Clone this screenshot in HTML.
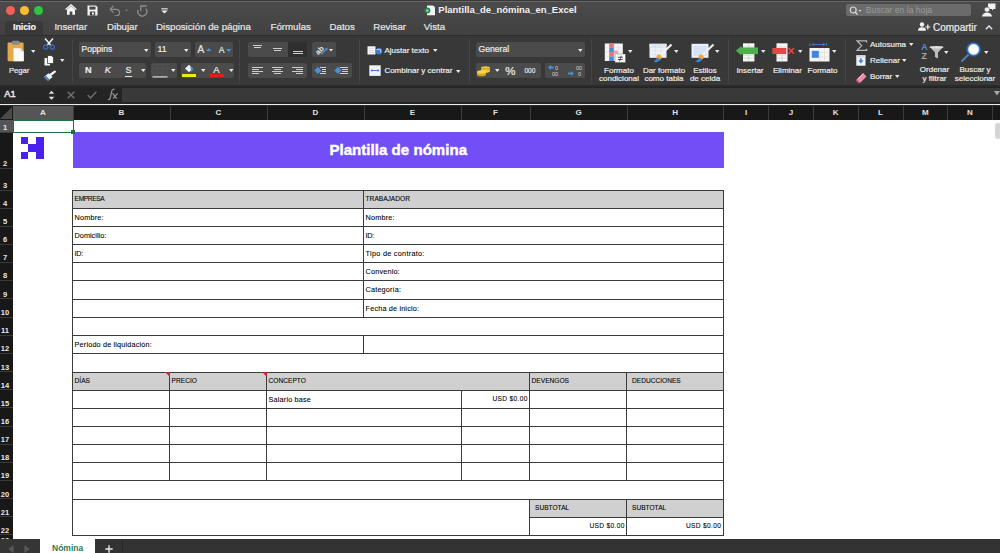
<!DOCTYPE html>
<html><head><meta charset="utf-8">
<style>
*{box-sizing:border-box;margin:0;padding:0}
html,body{width:1000px;height:553px;overflow:hidden;background:#2c2c2c;font-family:"Liberation Sans",sans-serif}
.a{position:absolute}
.t{position:absolute;white-space:nowrap;line-height:1}
#top{left:0;top:0;width:1000px;height:36px;background:linear-gradient(#4b4b4b,#414141)}
#rib{left:0;top:36px;width:1000px;height:49px;background:#383838}
#fbar{left:0;top:85px;width:1000px;height:19px;background:#232323}
#wline{left:0;top:103.7px;width:1000px;height:1.8px;background:#ececec}
#colh{left:0;top:105.5px;width:1000px;height:14.5px;background:#181818}
#grid{left:13px;top:120px;width:987px;height:419px;background:#fff}
#rowh{left:0;top:120px;width:13px;height:419px;background:#181818}
#sbar{left:0;top:539.4px;width:1000px;height:14px;background:#333}
.tab{color:#e6e6e6;font-size:9.7px;-webkit-text-stroke:0.2px #e6e6e6}
.ch{color:#e0e0e0;font-size:8px;font-weight:bold;text-align:center}
.rn{color:#e8e8e8;font-size:7.5px;font-weight:bold;text-align:center;width:10px}
.cl{font-size:7.3px;color:#000;letter-spacing:0.15px;-webkit-text-stroke:0.08px #000}
.cc{font-size:6.6px;color:#000;-webkit-text-stroke:0.08px #000}
.sep{top:39px;height:44px;width:1px;background:#464646}
.box{position:absolute;background:#4b4b4b;border-radius:2px}
.rl{color:#ececec;font-size:8px;-webkit-text-stroke:0.2px #ececec}
.c2{text-align:center;line-height:8px}

</style></head><body>
<div id="top" class="a"></div>
<div class="a" style="left:0;top:0;width:1000px;height:1px;background:#3a3a3a"></div>
<div class="a" style="left:0;top:1px;width:1000px;height:1px;background:#666"></div>
<div class="a" style="left:5.8px;top:5.6px;width:9.4px;height:9.4px;border-radius:50%;background:#f65e57"></div>
<div class="a" style="left:19.8px;top:5.6px;width:9.4px;height:9.4px;border-radius:50%;background:#fbbb2f"></div>
<div class="a" style="left:33.8px;top:5.6px;width:9.4px;height:9.4px;border-radius:50%;background:#2fc640"></div>
<!-- quick access icons -->
<svg class="a" style="left:65px;top:4px" width="12" height="11" viewBox="0 0 12 11">
 <path d="M0.6 5.6 L6 0.8 L11.4 5.6" fill="none" stroke="#f4f4f4" stroke-width="1.3"/>
 <path d="M2 5.5 L6 2 L10 5.5 V10.8 H7.3 V7.5 H4.7 V10.8 H2z" fill="#f4f4f4"/>
</svg>
<svg class="a" style="left:87px;top:4.5px" width="11" height="11" viewBox="0 0 11 11">
 <path d="M0.5 0.5 H9 L10.5 2 V10.5 H0.5z" fill="#f4f4f4"/>
 <rect x="2.5" y="1.6" width="6" height="3" fill="#444"/>
 <rect x="2.8" y="6.5" width="5.4" height="4" fill="#444"/>
 <rect x="5" y="7.5" width="2" height="2" fill="#f4f4f4"/>
</svg>
<svg class="a" style="left:108.5px;top:5px" width="20" height="11" viewBox="0 0 20 11">
 <path d="M4.5 1 L1.2 4.3 L4.5 7.6 M1.5 4.3 H7 a3.5 3.3 0 0 1 0 6.6 H5.5" fill="none" stroke="#8c8c8c" stroke-width="1.3"/>
 <circle cx="17.5" cy="5.2" r="1" fill="#7a7a7a"/>
</svg>
<svg class="a" style="left:136px;top:3.5px" width="13" height="13" viewBox="0 0 13 13">
 <path d="M2.2 5.8 A4.5 4.5 0 1 0 9.8 4.6" fill="none" stroke="#8c8c8c" stroke-width="1.3"/>
 <path d="M10.8 2 H4.8 V7.2" fill="none" stroke="#8c8c8c" stroke-width="1.3"/>
</svg>
<svg class="a" style="left:161px;top:8px" width="7" height="6" viewBox="0 0 7 6">
 <rect x="0.3" y="0.3" width="6.4" height="1.1" fill="#eee"/>
 <polygon points="0.3,2.4 6.7,2.4 3.5,5.6" fill="#eee"/>
</svg>
<!-- title -->
<svg class="a" style="left:424px;top:4.5px" width="12" height="11" viewBox="0 0 12 11">
 <path d="M3 0.5 H8 A3 3 0 0 1 11 3.5 V10.3 H3z" fill="#f4f4f4"/>
 <circle cx="3.4" cy="5.6" r="3" fill="#1f8a4c"/>
 <circle cx="3.4" cy="5.6" r="1.3" fill="#7fd69f"/>
</svg>
<div class="t" style="left:438.3px;top:5px;font-size:9.5px;font-weight:bold;color:#f2f2f2">Plantilla_de_nómina_en_Excel</div>
<!-- search -->
<div class="a" style="left:846px;top:4.2px;width:125px;height:12px;background:#6b6b6b;border-radius:2px"></div>
<svg class="a" style="left:849px;top:5.5px" width="14" height="10" viewBox="0 0 14 10">
 <circle cx="4.2" cy="4" r="3" fill="none" stroke="#dcdcdc" stroke-width="1.2"/>
 <path d="M6.3 6.2 L8.5 8.6" stroke="#dcdcdc" stroke-width="1.4"/>
 <polygon points="9.5,4 12.5,4 11,5.8" fill="#dcdcdc"/>
</svg>
<div class="t" style="left:865.7px;top:5.8px;font-size:8.6px;color:#9a9a9a">Buscar en la hoja</div>
<svg class="a" style="left:981px;top:3px" width="15" height="14" viewBox="0 0 15 14">
 <path d="M7 0.5 H14.5 V6 H12.5 L11 7.5 V6 H7z" fill="#f2f2f2"/>
 <circle cx="6" cy="6.5" r="2.6" fill="#f2f2f2" stroke="#444" stroke-width="0.6"/>
 <path d="M1 13.5 a5 4 0 0 1 10 0z" fill="#f2f2f2"/>
</svg>
<!-- tabs -->
<div class="a" style="left:5px;top:21px;width:38px;height:14px;background:#393939;border-radius:3px 3px 0 0"></div>
<div class="t tab" style="left:13px;top:22.8px;color:#fafafa;font-weight:bold;font-size:9px;letter-spacing:-0.1px">Inicio</div>
<div class="t tab" style="left:54.4px;top:21.8px">Insertar</div>
<div class="t tab" style="left:107px;top:21.8px">Dibujar</div>
<div class="t tab" style="left:156px;top:21.8px">Disposición de página</div>
<div class="t tab" style="left:270.5px;top:21.8px">Fórmulas</div>
<div class="t tab" style="left:329.5px;top:21.8px">Datos</div>
<div class="t tab" style="left:373.2px;top:21.8px">Revisar</div>
<div class="t tab" style="left:423.8px;top:21.8px">Vista</div>
<svg class="a" style="left:918px;top:22px" width="13" height="9" viewBox="0 0 13 9">
 <circle cx="4" cy="2.5" r="2.2" fill="#f0f0f0"/>
 <path d="M0 8.7 a4 3.4 0 0 1 8 0z" fill="#f0f0f0"/>
 <path d="M9.8 2.5 V7.5 M7.3 5 H12.3" stroke="#f0f0f0" stroke-width="1.2"/>
</svg>
<div class="t tab" style="left:933px;top:22.6px;color:#eeeeee;font-size:10px">Compartir</div>
<svg class="a" style="left:984.5px;top:25px" width="8" height="5" viewBox="0 0 8 5">
 <path d="M0.8 4.3 L4 1 L7.2 4.3" fill="none" stroke="#eee" stroke-width="1.3"/>
</svg>
<div id="rib" class="a"></div>
<div class="a" style="left:0;top:35px;width:1000px;height:1px;background:#2e2e2e"></div>
<!-- separators -->
<div class="a sep" style="left:71.5px"></div>
<div class="a sep" style="left:238.5px"></div>
<div class="a sep" style="left:358.5px"></div>
<div class="a sep" style="left:468.5px"></div>
<div class="a sep" style="left:591px"></div>
<div class="a sep" style="left:728px"></div>
<div class="a sep" style="left:845px"></div>
<!-- Paste group -->
<svg class="a" style="left:7px;top:40px" width="18" height="22" viewBox="0 0 18 22">
 <rect x="0.6" y="2.5" width="16" height="18.7" rx="1" fill="#e3a94a"/>
 <rect x="5" y="0.8" width="7.5" height="4" rx="1" fill="#8a8a8a"/>
 <path d="M6.5 8.2h7l3.3 3.3v9.7h-10.3z" fill="#fafafa"/>
 <path d="M13.5 8.2v3.3h3.3" fill="#cfcfcf"/>
</svg>
<svg class="a" style="left:30.5px;top:50px" width="5" height="3"><polygon points="0,0 4.5,0 2.25,3" fill="#e8e8e8"/></svg>
<div class="t rl" style="left:9px;top:66.5px;font-size:7.6px">Pegar</div>
<svg class="a" style="left:42px;top:38px" width="14" height="12" viewBox="0 0 14 12">
 <path d="M3 0.5 L9.5 8 M11 0.5 L4.5 8" stroke="#f2f2f2" stroke-width="1.5"/>
 <circle cx="3.7" cy="9" r="2.1" fill="none" stroke="#3b64a8" stroke-width="1.5"/>
 <circle cx="10.3" cy="9" r="2.1" fill="none" stroke="#3b64a8" stroke-width="1.5"/>
</svg>
<svg class="a" style="left:44px;top:55px" width="10" height="11" viewBox="0 0 10 11">
 <rect x="0.5" y="3" width="5.5" height="7.5" fill="#f5f5f5"/>
 <path d="M3.5 0.5h4l2 2v6h-6z" fill="#fafafa" stroke="#2b2b2b" stroke-width="0.7"/>
</svg>
<svg class="a" style="left:59.5px;top:59px" width="5" height="3"><polygon points="0,0 4.5,0 2.25,3" fill="#e8e8e8"/></svg>
<svg class="a" style="left:43px;top:70px" width="13" height="12" viewBox="0 0 13 12">
 <path d="M7.3 5 L11.8 1.6" stroke="#f4f4f4" stroke-width="2.3" stroke-linecap="round"/>
 <polygon points="1,6.8 5.6,3.2 9.6,7.1 5,10.8" fill="#eef3f8"/>
 <polygon points="1,6.8 2.6,5.5 6.6,9.4 5,10.8" fill="#4a7fc0"/>
</svg>
<!-- Font group -->
<div class="box" style="left:78.6px;top:42px;width:72px;height:14.8px"></div>
<div class="t rl" style="left:81.5px;top:45px;font-size:8.5px;color:#ececec">Poppins</div>
<svg class="a" style="left:143.5px;top:48.5px" width="5" height="3"><polygon points="0,0 4.5,0 2.25,3" fill="#e8e8e8"/></svg>
<div class="box" style="left:154.5px;top:42px;width:36px;height:14.8px"></div>
<div class="t rl" style="left:157.5px;top:45px;font-size:8.8px;color:#ececec">11</div>
<svg class="a" style="left:183.8px;top:48.5px" width="5" height="3"><polygon points="0,0 4.5,0 2.25,3" fill="#e8e8e8"/></svg>
<div class="box" style="left:194.6px;top:42px;width:38.8px;height:14.8px"></div>
<div class="t rl" style="left:197.5px;top:44.8px;font-size:10px;color:#e2e2e2">A</div>
<svg class="a" style="left:206px;top:48px" width="6" height="3"><polygon points="0,3 5.5,3 2.75,0" fill="#4c8fd6"/></svg>
<div class="t rl" style="left:218.8px;top:46px;font-size:8.6px;color:#e2e2e2">A</div>
<svg class="a" style="left:225.5px;top:48.5px" width="6" height="3"><polygon points="0,0 5.5,0 2.75,3" fill="#4c8fd6"/></svg>
<div class="box" style="left:78.6px;top:63.2px;width:67.6px;height:14.8px"></div>
<div class="t rl" style="left:85px;top:66.3px;font-size:9.2px;font-weight:bold;color:#ececec">N</div>
<div class="t rl" style="left:104.8px;top:66.3px;font-size:9.2px;font-style:italic;color:#ececec">K</div>
<div class="t rl" style="left:125.5px;top:66px;font-size:9px;color:#ececec">S</div>
<div class="a" style="left:125px;top:75.5px;width:7px;height:0.8px;background:#e0e0e0"></div>
<svg class="a" style="left:140.5px;top:69px" width="5" height="3"><polygon points="0,0 4.5,0 2.25,3" fill="#e8e8e8"/></svg>
<div class="box" style="left:151px;top:63.2px;width:26px;height:14.8px"></div>
<svg class="a" style="left:152px;top:64px" width="17" height="14" viewBox="0 0 17 14">
 <path d="M0.5 0.5h15v12h-15z M5.5 0.5v12 M10.5 0.5v12 M0.5 4.5h15 M0.5 8.5h15" fill="none" stroke="#555" stroke-width="0.8" stroke-dasharray="1 1"/>
 <rect x="0.5" y="12.3" width="15" height="1.2" fill="#d8d8d8"/>
</svg>
<svg class="a" style="left:171px;top:69px" width="5" height="3"><polygon points="0,0 4.5,0 2.25,3" fill="#e8e8e8"/></svg>
<div class="box" style="left:181px;top:63.2px;width:52.8px;height:14.8px"></div>
<svg class="a" style="left:184px;top:64px" width="11" height="9" viewBox="0 0 11 9">
 <path d="M1 4.5 L5 0.8 L9 4.5 L5 8.3z" fill="#f2f2f2"/>
 <path d="M6 2 L9.5 5 L7.5 8z" fill="#4a86c8"/>
</svg>
<div class="a" style="left:182px;top:74px;width:13.5px;height:3.2px;background:#f0ea12"></div>
<svg class="a" style="left:200.5px;top:69px" width="5" height="3"><polygon points="0,0 4.5,0 2.25,3" fill="#e8e8e8"/></svg>
<div class="t rl" style="left:213.3px;top:64.5px;font-size:9.5px;color:#e8e8e8">A</div>
<div class="a" style="left:210.4px;top:74px;width:13.5px;height:3.2px;background:#e61b1b"></div>
<svg class="a" style="left:228.5px;top:69px" width="5" height="3"><polygon points="0,0 4.5,0 2.25,3" fill="#e8e8e8"/></svg>
<!-- Alignment group -->
<div class="box" style="left:247.8px;top:42.2px;width:40.5px;height:15px;border-radius:2px 0 0 2px"></div>
<div class="a" style="left:288px;top:42.2px;width:18.6px;height:15px;background:#2f2f2f"></div>

<div class="box" style="left:312px;top:42.2px;width:24px;height:15px"></div>
<svg class="a" style="left:313px;top:43px" width="22" height="13" viewBox="0 0 22 13">
 <text x="1.5" y="10" font-family="Liberation Sans" font-size="7.5" font-weight="bold" fill="#e8e8e8" transform="rotate(-45 6 6.5)">ab</text>
 <path d="M8 11.5 L14 5.5" stroke="#4c8fd6" stroke-width="1.3"/>
 <polygon points="14.8,4.7 12,5.2 14.3,7.5" fill="#4c8fd6"/>
 <polygon points="16,6 20,6 18,8.5" fill="#e8e8e8"/>
</svg>
<div class="box" style="left:247.8px;top:63.2px;width:59.4px;height:15px"></div>
<svg class="a" style="left:246px;top:40px" width="64" height="40" viewBox="0 0 64 40"><rect x="7" y="5" width="9" height="1" fill="#cdcdcd"/><rect x="8" y="7" width="7" height="1" fill="#cdcdcd"/><rect x="27" y="8" width="9" height="1" fill="#cdcdcd"/><rect x="28" y="10" width="7" height="1" fill="#cdcdcd"/><rect x="47" y="11" width="10" height="1" fill="#cdcdcd"/><rect x="47" y="13" width="10" height="1" fill="#cdcdcd"/><rect x="6" y="27" width="11" height="1" fill="#cdcdcd"/><rect x="6" y="29" width="7" height="1" fill="#cdcdcd"/><rect x="6" y="31" width="11" height="1" fill="#cdcdcd"/><rect x="6" y="33" width="7" height="1" fill="#cdcdcd"/><rect x="26.0" y="27" width="11" height="1" fill="#cdcdcd"/><rect x="28.0" y="29" width="7" height="1" fill="#cdcdcd"/><rect x="26.0" y="31" width="11" height="1" fill="#cdcdcd"/><rect x="28.0" y="33" width="7" height="1" fill="#cdcdcd"/><rect x="46" y="27" width="11" height="1" fill="#cdcdcd"/><rect x="50" y="29" width="7" height="1" fill="#cdcdcd"/><rect x="46" y="31" width="11" height="1" fill="#cdcdcd"/><rect x="50" y="33" width="7" height="1" fill="#cdcdcd"/></svg>

<div class="box" style="left:312px;top:63.2px;width:40.2px;height:15px"></div>
<svg class="a" style="left:312px;top:63px" width="40" height="15" viewBox="0 0 40 15">
 <polygon points="6,3.8 9.6,7.4 6,11 2.4,7.4" fill="#4c8fd6"/>
 <rect x="8" y="4" width="6" height="1" fill="#d0d0d0"/><rect x="10" y="6" width="4" height="1" fill="#d0d0d0"/><rect x="10" y="8" width="4" height="1" fill="#d0d0d0"/><rect x="8" y="10" width="6" height="1" fill="#d0d0d0"/>
 <polygon points="26,3.8 29.6,7.4 26,11 22.4,7.4" fill="#4c8fd6"/>
 <rect x="28" y="4" width="8" height="1" fill="#d0d0d0"/><rect x="30" y="6" width="6" height="1" fill="#d0d0d0"/><rect x="30" y="8" width="6" height="1" fill="#d0d0d0"/><rect x="28" y="10" width="8" height="1" fill="#d0d0d0"/>
</svg>
<!-- Wrap / merge -->
<svg class="a" style="left:367px;top:46px" width="16" height="9" viewBox="0 0 16 9">
 <rect x="0.5" y="0.3" width="8" height="8.2" fill="#f4f4f4"/>
 <path d="M2 2.5h5M2 4.5h4M2 6.5h5" stroke="#d0d0d0" stroke-width="0.6"/>
 <circle cx="12" cy="5.2" r="3.3" fill="#3f7fd0"/>
 <path d="M9.5 3.5 h4 v3" stroke="#cfe0f5" stroke-width="0.8" fill="none"/>
</svg>
<div class="t rl" style="left:384.4px;top:46.6px">Ajustar texto</div>
<svg class="a" style="left:433.2px;top:49px" width="5" height="3"><polygon points="0,0 4.5,0 2.25,3" fill="#e8e8e8"/></svg>
<svg class="a" style="left:368.5px;top:65px" width="12" height="11" viewBox="0 0 12 11">
 <rect x="0.3" y="0.3" width="11.4" height="10.6" fill="#eef2f7"/>
 <path d="M2 5.5h8" stroke="#3f7fd0" stroke-width="1"/>
 <polygon points="1.5,5.5 3.5,4 3.5,7" fill="#3f7fd0"/>
 <polygon points="10.5,5.5 8.5,4 8.5,7" fill="#3f7fd0"/>
</svg>
<div class="t rl" style="left:384.4px;top:67.2px">Combinar y centrar</div>
<svg class="a" style="left:456px;top:69.5px" width="5" height="3"><polygon points="0,0 4.5,0 2.25,3" fill="#e8e8e8"/></svg>
<!-- Number group -->
<div class="box" style="left:475.9px;top:42px;width:109px;height:15px"></div>
<div class="t rl" style="left:478.5px;top:45.2px;font-size:8.6px;color:#ececec">General</div>
<svg class="a" style="left:578.2px;top:48.7px" width="5" height="3"><polygon points="0,0 4.5,0 2.25,3" fill="#e8e8e8"/></svg>
<div class="box" style="left:475.9px;top:63.4px;width:65px;height:14.4px"></div>
<svg class="a" style="left:476px;top:65px" width="15" height="12" viewBox="0 0 15 12">
 <ellipse cx="9.5" cy="3" rx="4.5" ry="1.8" fill="#f0c93a"/>
 <path d="M5 3v2.5a4.5 1.8 0 0 0 9 0V3" fill="#d9a520"/>
 <ellipse cx="9.5" cy="6" rx="4.5" ry="1.8" fill="#f0c93a"/>
 <path d="M1 7v2.5a4.5 1.8 0 0 0 9 0V7" fill="#d9a520"/>
 <ellipse cx="5.5" cy="7" rx="4.5" ry="1.8" fill="#f5d54a"/>
</svg>
<svg class="a" style="left:494.5px;top:69px" width="5" height="3"><polygon points="0,0 4.5,0 2.25,3" fill="#e8e8e8"/></svg>
<div class="t rl" style="left:505.3px;top:65.5px;font-size:11.5px;color:#ececec">%</div>
<div class="t rl" style="left:524.5px;top:68.3px;font-size:6.5px;color:#d8d8d8">000</div>
<div class="box" style="left:545.4px;top:63.4px;width:39.6px;height:14.4px"></div>
<svg class="a" style="left:547px;top:64px" width="38" height="13" viewBox="0 0 38 13">
 <polygon points="1,3.5 4,1 4,6" fill="#4c8fd6"/><rect x="3.5" y="2.5" width="3" height="2" fill="#4c8fd6"/>
 <text x="8" y="6" font-family="Liberation Sans" font-size="5.5" fill="#d8d8d8">0</text>
 <text x="5" y="12" font-family="Liberation Sans" font-size="5.5" fill="#d8d8d8">00</text>
 <text x="29" y="6" font-family="Liberation Sans" font-size="5.5" fill="#d8d8d8">00</text>
 <polygon points="27,9.5 24,7 24,12" fill="#4c8fd6" transform="translate(0,0)"/><rect x="21" y="8.5" width="3" height="2" fill="#4c8fd6"/>
 <text x="31" y="12" font-family="Liberation Sans" font-size="5.5" fill="#d8d8d8">0</text>
</svg>
<!-- Styles group -->
<svg class="a" style="left:604px;top:42.5px" width="23" height="20" viewBox="0 0 23 20">
 <rect x="0.8" y="0.5" width="18" height="17.5" fill="#f6f6f6"/>
 <path d="M0.8 4.8h18M0.8 9.1h18M0.8 13.4h18M10 0.5v17.5M14.5 0.5v17.5" stroke="#d8d8d8" stroke-width="0.5"/>
 <rect x="5.2" y="0.5" width="4.6" height="4.3" fill="#e87070"/>
 <rect x="5.2" y="4.8" width="4.6" height="4.3" fill="#4a8ad8"/>
 <rect x="5.2" y="9.1" width="4.6" height="4.3" fill="#e87070"/>
 <rect x="9.8" y="7.5" width="4" height="3" fill="#f0a0a0"/>
 <rect x="5.2" y="13.4" width="4.6" height="4.6" fill="#4a8ad8"/>
 <rect x="11" y="11" width="10.5" height="8.5" fill="#fafafa" stroke="#555" stroke-width="0.4"/>
 <path d="M13.8 14.3h5M13.8 16.5h5M15.5 18.3l1.8-5.5" stroke="#333" stroke-width="0.8"/>
</svg>
<svg class="a" style="left:628px;top:50px" width="5" height="3"><polygon points="0,0 4.5,0 2.25,3" fill="#e8e8e8"/></svg>
<div class="t rl c2" style="left:598px;width:42px;top:67.3px">Formato<br>condicional</div>
<svg class="a" style="left:649px;top:42.5px" width="24" height="20" viewBox="0 0 24 20">
 <rect x="0.5" y="0.8" width="17" height="14" fill="#eef3fa"/>
 <rect x="0.5" y="0.8" width="17" height="3" fill="#dfe8f3"/>
 <path d="M0.5 4.5h17M0.5 8h17M0.5 11.5h17M6 0.8v14M12 0.8v14" stroke="#c9d7e8" stroke-width="0.5"/>
 <path d="M22.5 1.5 L11 12.5" stroke="#f0f0f0" stroke-width="2.2"/>
 <circle cx="10" cy="14" r="2.6" fill="#f0a93a"/>
 <path d="M4.5 18.5 L9 14.5 L11.5 17 L7.5 19.5z" fill="#3f7fd0"/>
</svg>
<svg class="a" style="left:673.5px;top:50px" width="5" height="3"><polygon points="0,0 4.5,0 2.25,3" fill="#e8e8e8"/></svg>
<div class="t rl c2" style="left:642px;width:44px;top:67.3px">Dar formato<br>como tabla</div>
<svg class="a" style="left:690.5px;top:42.5px" width="24" height="20" viewBox="0 0 24 20">
 <rect x="0.5" y="0.8" width="17" height="14" fill="#eef3fa"/>
 <rect x="2.5" y="2.8" width="13" height="10" fill="#d3e2f5"/>
 <path d="M22.5 1.5 L11 12.5" stroke="#f0f0f0" stroke-width="2.2"/>
 <circle cx="10" cy="14" r="2.6" fill="#f0a93a"/>
 <path d="M4.5 18.5 L9 14.5 L11.5 17 L7.5 19.5z" fill="#3f7fd0"/>
</svg>
<svg class="a" style="left:715px;top:50px" width="5" height="3"><polygon points="0,0 4.5,0 2.25,3" fill="#e8e8e8"/></svg>
<div class="t rl c2" style="left:685px;width:40px;top:67.3px">Estilos<br>de celda</div>
<!-- Cells group -->
<svg class="a" style="left:735px;top:42.5px" width="25" height="19" viewBox="0 0 25 19">
 <rect x="8" y="0.3" width="11.4" height="18.2" fill="#f7f7f7"/>
 <path d="M8 4h11.4M8 12h11.4M8 15h11.4M13.7 12v6.5M13.7 0.3v3.7" stroke="#bbb" stroke-width="0.5"/>
 <rect x="6" y="4.5" width="17" height="6.6" fill="#4cb04c"/>
 <polygon points="0.8,7.8 6.5,3 6.5,12.6" fill="#4cb04c"/>
 <rect x="6" y="6.2" width="5" height="3.2" fill="#4cb04c"/>
</svg>
<svg class="a" style="left:761.2px;top:50px" width="5" height="3"><polygon points="0,0 4.5,0 2.25,3" fill="#e8e8e8"/></svg>
<div class="t rl" style="left:736.4px;top:66.6px">Insertar</div>
<svg class="a" style="left:771.5px;top:42.5px" width="24" height="19" viewBox="0 0 24 19">
 <rect x="4.5" y="0.3" width="11" height="18.2" fill="#f7f7f7"/>
 <path d="M4.5 4h11M4.5 12h11M4.5 15h11M10 12v6.5" stroke="#bbb" stroke-width="0.5"/>
 <rect x="0.3" y="5" width="14" height="6" fill="#e84545"/>
 <path d="M16.5 5 L22 10.8 M22 5 L16.5 10.8" stroke="#e84545" stroke-width="1.6"/>
</svg>
<svg class="a" style="left:797.5px;top:50px" width="5" height="3"><polygon points="0,0 4.5,0 2.25,3" fill="#e8e8e8"/></svg>
<div class="t rl" style="left:773px;top:66.6px">Eliminar</div>
<svg class="a" style="left:808.5px;top:41.5px" width="21" height="20" viewBox="0 0 21 20">
 <path d="M1 1v3M17.5 1v3" stroke="#3f7fd0" stroke-width="0.9"/>
 <path d="M3 2.5h13" stroke="#3f7fd0" stroke-width="0.9"/>
 <polygon points="2.5,2.5 5,1 5,4" fill="#3f7fd0"/><polygon points="16.5,2.5 14,1 14,4" fill="#3f7fd0"/>
 <rect x="0.5" y="6" width="20" height="13.5" fill="#f4f4f4"/>
 <path d="M11 6v13.5M15.5 6v13.5M0.5 10.5h20M0.5 15h20" stroke="#d5d5d5" stroke-width="0.5"/>
 <rect x="2.8" y="8.8" width="7" height="7" fill="#3f86d6"/>
</svg>
<svg class="a" style="left:832.4px;top:50px" width="5" height="3"><polygon points="0,0 4.5,0 2.25,3" fill="#e8e8e8"/></svg>
<div class="t rl" style="left:807.6px;top:66.6px">Formato</div>
<!-- Editing group -->
<svg class="a" style="left:855.5px;top:39.5px" width="12" height="12" viewBox="0 0 12 12">
 <path d="M10.6 2.4 V0.8 H1 L5.6 5.6 L1 10.4 H10.6 V8.8" fill="none" stroke="#b5b5b5" stroke-width="1.3"/>
</svg>
<div class="t rl" style="left:870px;top:41.3px">Autosuma</div>
<svg class="a" style="left:908.5px;top:43px" width="5" height="3"><polygon points="0,0 4.5,0 2.25,3" fill="#e8e8e8"/></svg>
<svg class="a" style="left:856px;top:55px" width="10" height="11" viewBox="0 0 10 11">
 <rect x="0.3" y="0.3" width="9.2" height="10.4" fill="#f4f4f4"/>
 <rect x="0.3" y="0.3" width="9.2" height="2" fill="#cfd8e3"/>
 <path d="M4.9 3v3" stroke="#3f7fd0" stroke-width="1.4"/>
 <polygon points="2.2,5.3 7.6,5.3 4.9,8.5" fill="#3f7fd0"/>
</svg>
<div class="t rl" style="left:870px;top:56.8px">Rellenar</div>
<svg class="a" style="left:902px;top:58.5px" width="5" height="3"><polygon points="0,0 4.5,0 2.25,3" fill="#e8e8e8"/></svg>
<svg class="a" style="left:854.5px;top:70.5px" width="13" height="13" viewBox="0 0 13 13">
 <path d="M1.5 8.5 L8 2 L11.5 5.5 L5 12z" fill="#f08aa8"/>
 <path d="M1.5 8.5 L5 12 L3.5 12.3 L1 10z" fill="#c45b7e"/>
 <path d="M3 8 L8.5 2.5" stroke="#fbc4d4" stroke-width="0.8"/>
</svg>
<div class="t rl" style="left:870px;top:73px">Borrar</div>
<svg class="a" style="left:895px;top:75px" width="5" height="3"><polygon points="0,0 4.5,0 2.25,3" fill="#e8e8e8"/></svg>
<div class="t" style="left:921.2px;top:42.5px;font-size:8.8px;font-weight:bold;color:#4c8fd6">A</div>
<div class="t" style="left:921.5px;top:52px;font-size:8.8px;font-weight:bold;color:#a8a8a8">Z</div>
<svg class="a" style="left:929px;top:46px" width="15" height="13" viewBox="0 0 15 13">
 <path d="M0.5 0.5h14L9 6.5v6L6 11V6.5z" fill="#bdbdbd"/>
 <ellipse cx="7.5" cy="1.3" rx="7" ry="1.2" fill="#e0e0e0"/>
</svg>
<svg class="a" style="left:944.2px;top:50.5px" width="5" height="3"><polygon points="0,0 4.5,0 2.25,3" fill="#e8e8e8"/></svg>
<div class="t rl c2" style="left:914px;width:41px;top:66px;line-height:8.8px">Ordenar<br>y filtrar</div>
<svg class="a" style="left:959px;top:40px" width="24" height="24" viewBox="0 0 24 24">
 <defs><radialGradient id="mg" cx="0.5" cy="0.5" r="0.5"><stop offset="0.5" stop-color="#ffffff"/><stop offset="0.62" stop-color="#d8e6f7"/><stop offset="0.72" stop-color="#4a82c8"/><stop offset="0.88" stop-color="#24508a"/><stop offset="1" stop-color="#24508a" stop-opacity="0"/></radialGradient></defs>
 <path d="M9.3 14.7 L3 21" stroke="#4a80c0" stroke-width="2" stroke-linecap="round"/>
 <circle cx="14.6" cy="9.4" r="8" fill="url(#mg)"/>
</svg>
<svg class="a" style="left:984px;top:50.5px" width="5" height="3"><polygon points="0,0 4.5,0 2.25,3" fill="#e8e8e8"/></svg>
<div class="t rl c2" style="left:953px;width:44px;top:66px;line-height:8.8px">Buscar y<br>seleccionar</div>

<!-- formula bar -->
<div id="fbar" class="a"></div>
<div class="a" style="left:0;top:85px;width:1000px;height:2px;background:#2a2a2a"></div>
<div class="a" style="left:0;top:87px;width:56px;height:15.5px;background:#272727"></div>
<div class="a" style="left:56px;top:87px;width:66px;height:15.5px;background:#242424"></div>
<div class="a" style="left:122px;top:87.5px;width:878px;height:14.5px;background:#393939"></div>
<div class="t" style="left:4.2px;top:89.6px;font-size:9.3px;color:#ececec;-webkit-text-stroke:0.4px #ececec">A1</div>
<svg class="a" style="left:47.5px;top:89.5px" width="7" height="11" viewBox="0 0 7 11">
 <polygon points="0.8,3.8 6.2,3.8 3.5,0.8" fill="#e6e6e6"/>
 <polygon points="0.8,6.8 6.2,6.8 3.5,9.8" fill="#e6e6e6"/>
</svg>
<svg class="a" style="left:67px;top:91px" width="8" height="8" viewBox="0 0 8 8">
 <path d="M0.7 0.7 L7.3 7.3 M7.3 0.7 L0.7 7.3" stroke="#707070" stroke-width="1.4"/>
</svg>
<svg class="a" style="left:86.5px;top:91px" width="10" height="8" viewBox="0 0 10 8">
 <path d="M0.7 4 L3.5 7 L9.3 0.7" fill="none" stroke="#707070" stroke-width="1.4"/>
</svg>
<svg class="a" style="left:106px;top:88px" width="14" height="13" viewBox="0 0 14 13">
 <path d="M8.6 1.6 C7.6 0.8 6.3 1.2 5.9 2.6 L4.2 10 C3.8 11.6 2.8 12 1.8 11.3" fill="none" stroke="#8e8e8e" stroke-width="1.3"/>
 <path d="M6.3 5.6 C8.2 5 8.6 10.4 11.2 10.4 M11.8 5.6 C10.4 5.8 8.6 9 7.2 10.6" fill="none" stroke="#8e8e8e" stroke-width="1.3"/>
</svg>
<svg class="a" style="left:994px;top:91px" width="7" height="5"><polygon points="0,0 6,0 3,4.5" fill="#aaa"/></svg>

<div id="wline" class="a"></div>
<div id="colh" class="a"></div>
<div class="a" style="left:13px;top:106px;width:60px;height:14px;background:#555"></div>
<div class="t ch" style="left:13px;top:109.2px;width:60px">A</div>
<div class="t ch" style="left:73px;top:109.2px;width:97px">B</div>
<div class="a" style="left:72.5px;top:106px;width:1px;height:14px;background:#3c3c3c"></div>
<div class="t ch" style="left:170px;top:109.2px;width:97px">C</div>
<div class="a" style="left:169.5px;top:106px;width:1px;height:14px;background:#3c3c3c"></div>
<div class="t ch" style="left:267px;top:109.2px;width:97px">D</div>
<div class="a" style="left:266.5px;top:106px;width:1px;height:14px;background:#3c3c3c"></div>
<div class="t ch" style="left:364px;top:109.2px;width:97px">E</div>
<div class="a" style="left:363.5px;top:106px;width:1px;height:14px;background:#3c3c3c"></div>
<div class="t ch" style="left:461px;top:109.2px;width:69px">F</div>
<div class="a" style="left:460.5px;top:106px;width:1px;height:14px;background:#3c3c3c"></div>
<div class="t ch" style="left:530px;top:109.2px;width:97px">G</div>
<div class="a" style="left:529.5px;top:106px;width:1px;height:14px;background:#3c3c3c"></div>
<div class="t ch" style="left:627px;top:109.2px;width:96.5px">H</div>
<div class="a" style="left:626.5px;top:106px;width:1px;height:14px;background:#3c3c3c"></div>
<div class="t ch" style="left:723.5px;top:109.2px;width:45.0px">I</div>
<div class="a" style="left:723.0px;top:106px;width:1px;height:14px;background:#3c3c3c"></div>
<div class="t ch" style="left:768.5px;top:109.2px;width:45.0px">J</div>
<div class="a" style="left:768.0px;top:106px;width:1px;height:14px;background:#3c3c3c"></div>
<div class="t ch" style="left:813.5px;top:109.2px;width:44.5px">K</div>
<div class="a" style="left:813.0px;top:106px;width:1px;height:14px;background:#3c3c3c"></div>
<div class="t ch" style="left:858px;top:109.2px;width:45px">L</div>
<div class="a" style="left:857.5px;top:106px;width:1px;height:14px;background:#3c3c3c"></div>
<div class="t ch" style="left:903px;top:109.2px;width:44.700000000000045px">M</div>
<div class="a" style="left:902.5px;top:106px;width:1px;height:14px;background:#3c3c3c"></div>
<div class="t ch" style="left:947.7px;top:109.2px;width:44.299999999999955px">N</div>
<div class="a" style="left:947.2px;top:106px;width:1px;height:14px;background:#3c3c3c"></div>
<div class="t ch" style="left:992px;top:109.2px;width:45px">O</div>
<div class="a" style="left:991.5px;top:106px;width:1px;height:14px;background:#3c3c3c"></div>
<svg class="a" style="left:0;top:106px" width="13" height="14"><polygon points="12,1 12,13 0,13" fill="#4a4a4a"/></svg>
<div id="rowh" class="a"></div>
<div id="grid" class="a"></div>
<div class="a" style="left:0;top:120px;width:13px;height:12px;background:#555"></div>
<div class="t rn" style="left:0;top:124px">1</div>
<div class="a" style="left:0;top:131.5px;width:13px;height:1px;background:#3a3a3a"></div>
<div class="t rn" style="left:0;top:160px">2</div>
<div class="a" style="left:0;top:167.5px;width:13px;height:1px;background:#3a3a3a"></div>
<div class="t rn" style="left:0;top:182px">3</div>
<div class="a" style="left:0;top:189.5px;width:13px;height:1px;background:#3a3a3a"></div>
<div class="t rn" style="left:0;top:200px">4</div>
<div class="a" style="left:0;top:207.5px;width:13px;height:1px;background:#3a3a3a"></div>
<div class="t rn" style="left:0;top:218px">5</div>
<div class="a" style="left:0;top:225.5px;width:13px;height:1px;background:#3a3a3a"></div>
<div class="t rn" style="left:0;top:236px">6</div>
<div class="a" style="left:0;top:243.5px;width:13px;height:1px;background:#3a3a3a"></div>
<div class="t rn" style="left:0;top:254px">7</div>
<div class="a" style="left:0;top:261.5px;width:13px;height:1px;background:#3a3a3a"></div>
<div class="t rn" style="left:0;top:272px">8</div>
<div class="a" style="left:0;top:279.5px;width:13px;height:1px;background:#3a3a3a"></div>
<div class="t rn" style="left:0;top:290.5px">9</div>
<div class="a" style="left:0;top:298.0px;width:13px;height:1px;background:#3a3a3a"></div>
<div class="t rn" style="left:0;top:309px">10</div>
<div class="a" style="left:0;top:316.5px;width:13px;height:1px;background:#3a3a3a"></div>
<div class="t rn" style="left:0;top:327px">11</div>
<div class="a" style="left:0;top:334.5px;width:13px;height:1px;background:#3a3a3a"></div>
<div class="t rn" style="left:0;top:345px">12</div>
<div class="a" style="left:0;top:352.5px;width:13px;height:1px;background:#3a3a3a"></div>
<div class="t rn" style="left:0;top:363.5px">13</div>
<div class="a" style="left:0;top:371.0px;width:13px;height:1px;background:#3a3a3a"></div>
<div class="t rn" style="left:0;top:381.5px">14</div>
<div class="a" style="left:0;top:389.0px;width:13px;height:1px;background:#3a3a3a"></div>
<div class="t rn" style="left:0;top:399.7px">15</div>
<div class="a" style="left:0;top:407.2px;width:13px;height:1px;background:#3a3a3a"></div>
<div class="t rn" style="left:0;top:418px">16</div>
<div class="a" style="left:0;top:425.5px;width:13px;height:1px;background:#3a3a3a"></div>
<div class="t rn" style="left:0;top:436px">17</div>
<div class="a" style="left:0;top:443.5px;width:13px;height:1px;background:#3a3a3a"></div>
<div class="t rn" style="left:0;top:454.3px">18</div>
<div class="a" style="left:0;top:461.8px;width:13px;height:1px;background:#3a3a3a"></div>
<div class="t rn" style="left:0;top:472.4px">19</div>
<div class="a" style="left:0;top:479.9px;width:13px;height:1px;background:#3a3a3a"></div>
<div class="t rn" style="left:0;top:490.6px">20</div>
<div class="a" style="left:0;top:498.1px;width:13px;height:1px;background:#3a3a3a"></div>
<div class="t rn" style="left:0;top:508.79999999999995px">21</div>
<div class="a" style="left:0;top:516.3px;width:13px;height:1px;background:#3a3a3a"></div>
<div class="t rn" style="left:0;top:526.7px">22</div>
<div class="a" style="left:0;top:534.2px;width:13px;height:1px;background:#3a3a3a"></div>
<div class="t rn" style="left:0;top:536.8px">23</div>
<div class="a" style="left:0;top:552.5px;width:13px;height:1px;background:#3a3a3a"></div>
<div class="a" style="left:73px;top:132px;width:650.5px;height:36px;background:#714ef6"></div>
<div class="t" style="left:73px;width:650.5px;text-align:center;top:142.4px;font-size:15px;font-weight:bold;color:#fff;letter-spacing:0.05px;-webkit-text-stroke:0.45px #fff">Plantilla de nómina</div>
<div class="a" style="left:21px;top:137px;width:7.300000000000001px;height:6.599999999999994px;background:#4b20ee"></div>
<div class="a" style="left:21px;top:151.8px;width:7.300000000000001px;height:7.599999999999994px;background:#4b20ee"></div>
<div class="a" style="left:28.3px;top:143.6px;width:7.900000000000002px;height:8.200000000000017px;background:#4b20ee"></div>
<div class="a" style="left:36.2px;top:137px;width:7.599999999999994px;height:22.400000000000006px;background:#4b20ee"></div>
<div class="a" style="left:73px;top:190px;width:650.5px;height:18px;background:#d0d0d0"></div>
<div class="a" style="left:73px;top:371.5px;width:650.5px;height:18.0px;background:#d0d0d0"></div>
<div class="a" style="left:530px;top:498.6px;width:193.5px;height:18.199999999999932px;background:#d0d0d0"></div>
<div class="a" style="left:72px;top:190px;width:652px;height:1px;background:#3b3b3b"></div>
<div class="a" style="left:72px;top:208px;width:652px;height:1px;background:#3b3b3b"></div>
<div class="a" style="left:72px;top:226px;width:652px;height:1px;background:#3b3b3b"></div>
<div class="a" style="left:72px;top:244px;width:652px;height:1px;background:#3b3b3b"></div>
<div class="a" style="left:72px;top:262px;width:652px;height:1px;background:#3b3b3b"></div>
<div class="a" style="left:72px;top:280px;width:652px;height:1px;background:#3b3b3b"></div>
<div class="a" style="left:72px;top:299px;width:652px;height:1px;background:#3b3b3b"></div>
<div class="a" style="left:72px;top:317px;width:652px;height:1px;background:#3b3b3b"></div>
<div class="a" style="left:72px;top:335px;width:652px;height:1px;background:#3b3b3b"></div>
<div class="a" style="left:72px;top:353px;width:652px;height:1px;background:#3b3b3b"></div>
<div class="a" style="left:72px;top:372px;width:652px;height:1px;background:#3b3b3b"></div>
<div class="a" style="left:72px;top:390px;width:652px;height:1px;background:#3b3b3b"></div>
<div class="a" style="left:72px;top:408px;width:652px;height:1px;background:#3b3b3b"></div>
<div class="a" style="left:72px;top:426px;width:652px;height:1px;background:#3b3b3b"></div>
<div class="a" style="left:72px;top:444px;width:652px;height:1px;background:#3b3b3b"></div>
<div class="a" style="left:72px;top:462px;width:652px;height:1px;background:#3b3b3b"></div>
<div class="a" style="left:72px;top:480px;width:652px;height:1px;background:#3b3b3b"></div>
<div class="a" style="left:72px;top:499px;width:652px;height:1px;background:#3b3b3b"></div>
<div class="a" style="left:529px;top:517px;width:195px;height:1px;background:#3b3b3b"></div>
<div class="a" style="left:72px;top:535px;width:652px;height:1px;background:#3b3b3b"></div>
<div class="a" style="left:72px;top:190px;width:1px;height:346px;background:#3b3b3b"></div>
<div class="a" style="left:723px;top:190px;width:1px;height:346px;background:#3b3b3b"></div>
<div class="a" style="left:363px;top:190px;width:1px;height:128px;background:#3b3b3b"></div>
<div class="a" style="left:363px;top:335px;width:1px;height:19px;background:#3b3b3b"></div>
<div class="a" style="left:169px;top:372px;width:1px;height:109px;background:#3b3b3b"></div>
<div class="a" style="left:266px;top:372px;width:1px;height:109px;background:#3b3b3b"></div>
<div class="a" style="left:461px;top:390px;width:1px;height:91px;background:#3b3b3b"></div>
<div class="a" style="left:529px;top:372px;width:1px;height:109px;background:#3b3b3b"></div>
<div class="a" style="left:626px;top:372px;width:1px;height:109px;background:#3b3b3b"></div>
<div class="a" style="left:529px;top:499px;width:1px;height:37px;background:#3b3b3b"></div>
<div class="a" style="left:626px;top:499px;width:1px;height:37px;background:#3b3b3b"></div>
<svg class="a" style="left:165px;top:371.5px" width="5" height="5"><polygon points="0,0 5,0 5,5" fill="#d2232a"/></svg>
<svg class="a" style="left:262px;top:371.5px" width="5" height="5"><polygon points="0,0 5,0 5,5" fill="#d2232a"/></svg>
<div class="t cc" style="left:74.6px;top:196.3px;letter-spacing:-0.35px">EMPRESA</div>
<div class="t cc" style="left:365.6px;top:196.3px;">TRABAJADOR</div>
<div class="t cl" style="left:74.6px;top:214px;">Nombre:</div>
<div class="t cl" style="left:74.6px;top:232px;letter-spacing:0px">Domicilio:</div>
<div class="t cl" style="left:74.6px;top:250px;letter-spacing:-0.3px">ID:</div>
<div class="t cl" style="left:365.6px;top:214px;">Nombre:</div>
<div class="t cl" style="left:365.6px;top:232px;letter-spacing:-0.3px">ID:</div>
<div class="t cl" style="left:365.6px;top:250px;letter-spacing:0.27px">Tipo de contrato:</div>
<div class="t cl" style="left:365.6px;top:268px;">Convenio:</div>
<div class="t cl" style="left:365.6px;top:286px;">Categoría:</div>
<div class="t cl" style="left:365.6px;top:304.5px;">Fecha de inicio:</div>
<div class="t cl" style="left:74.6px;top:341px;">Periodo de liquidación:</div>
<div class="t cc" style="left:74.6px;top:377.8px;">DÍAS</div>
<div class="t cc" style="left:171.6px;top:377.8px;">PRECIO</div>
<div class="t cc" style="left:268.6px;top:377.8px;">CONCEPTO</div>
<div class="t cc" style="left:531.6px;top:377.8px;">DEVENGOS</div>
<div class="t cc" style="left:632px;top:377.8px;">DEDUCCIONES</div>
<div class="t cl" style="left:268.6px;top:395.5px;">Salario base</div>
<div class="t cc" style="right:472.20000000000005px;top:395.8px;letter-spacing:0.35px">USD $0.00</div>
<div class="t cc" style="left:535px;top:504.90000000000003px;">SUBTOTAL</div>
<div class="t cc" style="left:632px;top:504.90000000000003px;">SUBTOTAL</div>
<div class="t cc" style="right:375.20000000000005px;top:523.0999999999999px;letter-spacing:0.35px">USD $0.00</div>
<div class="t cc" style="right:278.70000000000005px;top:523.0999999999999px;letter-spacing:0.35px">USD $0.00</div>
<div class="a" style="left:12.5px;top:119.5px;width:61px;height:13px;border:1.5px solid #1e7145"></div>
<div class="a" style="left:71px;top:130px;width:4px;height:4px;background:#1e7145"></div>
<div class="a" style="left:995px;top:123px;width:6px;height:16px;border-radius:3px;background:#d6d6d6"></div>
<div id="sbar" class="a"></div>
<div class="a" style="left:0;top:539.4px;width:39.7px;height:14px;background:#353535"></div>
<svg class="a" style="left:7.5px;top:545px" width="6" height="8" viewBox="0 0 6 8"><polygon points="5.5,0 5.5,8 0.5,4" fill="#5a5a5a"/></svg>
<svg class="a" style="left:24px;top:545px" width="6" height="8" viewBox="0 0 6 8"><polygon points="0.5,0 0.5,8 5.5,4" fill="#5a5a5a"/></svg>
<div class="a" style="left:39.7px;top:539.4px;width:55.3px;height:14px;background:#fff"></div>
<div class="t" style="left:52px;top:543.5px;font-size:8.5px;font-weight:bold;color:#2c7a50">Nómina</div>
<svg class="a" style="left:104.5px;top:545px" width="8" height="8" viewBox="0 0 8 8"><path d="M4 0.3V7.7M0.3 4H7.7" stroke="#e8e8e8" stroke-width="1.4"/></svg>
<div class="a" style="left:121.5px;top:539.4px;width:1px;height:14px;background:#262626"></div>

</body></html>
